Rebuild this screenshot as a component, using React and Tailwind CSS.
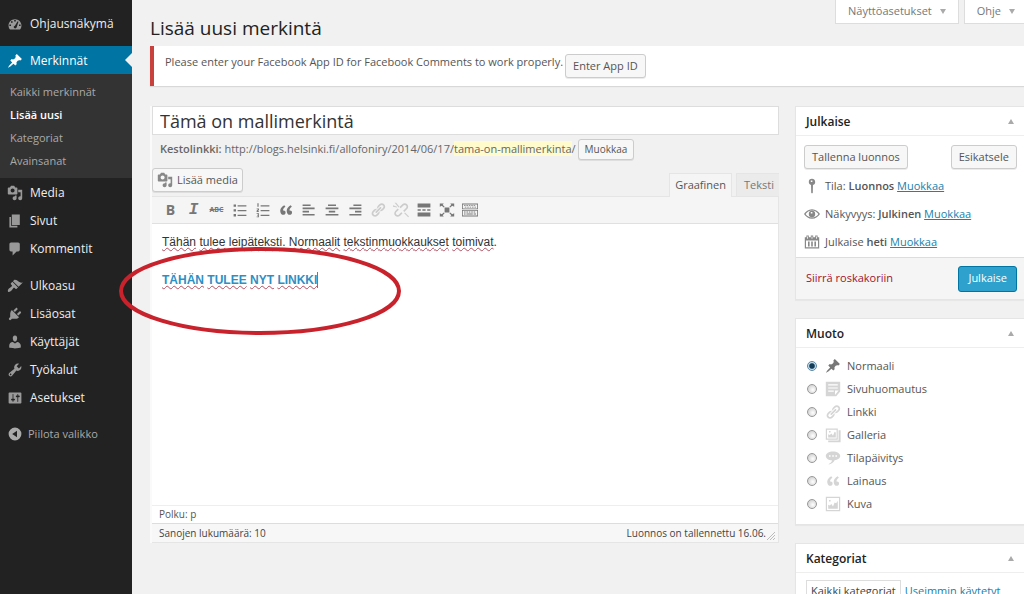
import React, { useState } from 'react'
import clsx from 'clsx'

const PATHS = {
  media:
    'M13 11V4c0-.55-.45-1-1-1h-1.67L9 1H5L3.67 3H2c-.55 0-1 .45-1 1v7c0 .55.45 1 1 1h10c.55 0 1-.45 1-1zM7 4.5c1.38 0 2.5 1.12 2.5 2.5S8.38 9.5 7 9.5 4.5 8.38 4.5 7 5.62 4.5 7 4.5zM14 6h5v10.5c0 1.38-1.12 2.5-2.5 2.5S14 17.88 14 16.5s1.12-2.5 2.5-2.5c.17 0 .34.02.5.05V9h-3V6zm-4 8.05V13h2v3.5c0 1.38-1.12 2.5-2.5 2.5S7 17.88 7 16.5 8.12 14 9.5 14c.17 0 .34.02.5.05z',
  pin: 'M10.44 3.02l1.82-1.82 6.36 6.35-1.83 1.82c-1.05-.68-2.48-.57-3.41.36l-.75.75c-.92.93-1.04 2.35-.35 3.41l-1.83 1.82-2.41-2.41-2.8 2.79c-.42.42-3.38 2.71-3.8 2.29s1.86-3.39 2.28-3.81l2.79-2.79L4.1 9.36l1.83-1.82c1.05.69 2.48.57 3.4-.36l.75-.75c.93-.92 1.05-2.35.36-3.41z',
  gauge:
    'M3.76 17h12.48c1.16-1.35 1.86-3.1 1.86-5.02 0-4.41-3.63-7.98-8.1-7.98S1.9 7.57 1.9 11.98c0 1.92.7 3.67 1.86 5.02zM9 5h2v2H9zM5 6.500h2v2H5zM3 10.500h2v2H3zM15 10.500h2v2h-2zM13.300 6.500l1 .6-2.300 7.400c-.5 1.500-3.600 1.300-3.600-.7 0-1 .8-1.600 1.500-1.700z',
  page: 'M6 15V2h10v13H6zm-1 1h8v2H3V5h2v11z',
  comment: 'M5 2h9c1.1 0 2 .9 2 2v7c0 1.1-.9 2-2 2h-2l-5 5v-5H5c-1.1 0-2-.9-2-2V4c0-1.1.9-2 2-2z',
  brush:
    'M14.48 11.06L7.41 3.99l1.5-1.5c.5-.56 2.3-.47 3.51.32 1.21.8 1.43 1.28 2.91 2.1 1.18.64 2.45 1.26 4.45.85zm-.71.71L6.7 4.7 4.93 6.47c-.39.39-.39 1.02 0 1.41l1.06 1.06c.39.39.39 1.03 0 1.42-.6.6-1.43 1.11-2.21 1.69-.35.26-.7.53-1.01.84C1.43 14.23.4 16.08 1.4 17.07c.99 1 2.84-.03 4.18-1.36.31-.31.58-.66.85-1.02.57-.78 1.08-1.61 1.69-2.21.39-.39 1.02-.39 1.41 0l1.06 1.06c.39.39 1.02.39 1.41 0z',
  plug: 'M13.11 4.36L9.87 7.6 8 5.73l3.24-3.24c.35-.34 1.05-.2 1.56.32.52.51.66 1.21.31 1.55zm-8 1.77l.91-1.12 9.01 9.01-1.19.84c-.71.71-2.63 1.16-3.82 1.16H6.14L4.9 17.26c-.59.59-1.54.59-2.12 0-.59-.58-.59-1.53 0-2.12l1.24-1.24v-3.88c0-1.13.4-3.19 1.09-3.89zm7.26 3.97l3.24-3.24c.34-.35 1.04-.21 1.55.31.52.51.66 1.21.31 1.55l-3.24 3.25z',
  user: 'M10 9.25c-2.27 0-2.73-3.44-2.73-3.44C7 4.02 7.82 2 9.97 2c2.16 0 2.98 2.02 2.71 3.81 0 0-.41 3.44-2.68 3.44zm0 2.57L12.72 10c2.39 0 4.52 2.33 4.52 4.53v2.49s-3.65 1.13-7.24 1.13c-3.65 0-7.24-1.13-7.24-1.13v-2.49c0-2.25 1.94-4.48 4.47-4.48z',
  wrench:
    'M16.68 9.77c-1.34 1.34-3.3 1.67-4.95.99l-5.41 6.52c-.99.99-2.59.99-3.58 0s-.99-2.59 0-3.57l6.52-5.42c-.68-1.65-.35-3.61.99-4.95 1.28-1.28 3.12-1.62 4.72-1.06l-2.89 2.89 2.82 2.82 2.86-2.87c.53 1.58.18 3.39-1.08 4.65zM3.81 16.21c.4.39 1.04.39 1.43 0 .4-.4.4-1.04 0-1.43-.39-.4-1.03-.4-1.43 0-.39.39-.39 1.03 0 1.43z',
  settings:
    'M2 4c0-.55.45-1 1-1h14c.55 0 1 .45 1 1v12c0 .55-.45 1-1 1H3c-.55 0-1-.45-1-1zM8 11h1c.55 0 1 .45 1 1s-.45 1-1 1H8v1.500c0 .28-.22.5-.5.5s-.5-.22-.5-.5V13H6c-.55 0-1-.45-1-1s.45-1 1-1h1V5.500c0-.28.22-.5.5-.5s.5.22.5.5zM13 9h-1c-.55 0-1-.45-1-1s.45-1 1-1h1V5.500c0-.28.22-.5.5-.5s.5.22.5.5V7h1c.55 0 1 .45 1 1s-.45 1-1 1h-1v5.500c0 .28-.22.5-.5.5s-.5-.22-.5-.5z',
  collapse: 'M10 2a8 8 0 1 0 0 16 8 8 0 0 0 0-16zM12.500 6v8L6.500 10z',
  link: 'M17.74 2.76c1.68 1.69 1.68 4.41 0 6.1l-1.53 1.52c-1.12 1.12-2.7 1.47-4.14 1.09l2.62-2.61.76-.77.76-.76c.84-.84.84-2.2 0-3.04-.84-.85-2.2-.85-3.04 0l-.77.76-3.38 3.38c-.37-1.44-.02-3.02 1.1-4.14l1.52-1.53c1.69-1.68 4.42-1.68 6.1 0zM8.59 13.43l5.34-5.34c.42-.42.42-1.1 0-1.52-.44-.43-1.13-.39-1.53 0l-5.33 5.34c-.42.42-.42 1.1 0 1.52.44.43 1.13.39 1.52 0zm-.76 2.29l4.14-4.15c.38 1.44.03 3.02-1.09 4.14l-1.52 1.53c-1.69 1.68-4.41 1.68-6.1 0-1.68-1.68-1.68-4.42 0-6.1l1.53-1.52c1.12-1.12 2.7-1.47 4.14-1.1l-4.14 4.15c-.85.84-.85 2.2 0 3.05.84.84 2.2.84 3.04 0z',
  unlink:
    'M17.700 2.800c1.700 1.700 1.700 4.400 0 6.100l-3.500 3.500-1.500-1.500 3.500-3.500c.9-.9.9-2.200 0-3.100s-2.200-.9-3.100 0L9.600 7.800 8.100 6.300l3.500-3.500c1.700-1.700 4.400-1.700 6.100 0zM2.800 17.200c-1.700-1.700-1.700-4.400 0-6.100l3-3 1.500 1.500-3 3c-.9.9-.9 2.200 0 3.100s2.200.9 3.100 0l3-3 1.500 1.500-3 3c-1.700 1.700-4.400 1.700-6.100 0zM2 1h2l4 5-1 1zM0 4l5 2v1L0 6zM19 19l-5-5 1-1 5 5z',
  quote:
    'M9.49 13.22c0-.74-.2-1.38-.61-1.9-.62-.78-1.83-.88-2.53-.72-.29-1.65 1.11-3.75 2.92-4.65L7.88 4c-2.73 1.3-5.42 4.28-4.96 8.05C3.21 14.43 4.59 16 6.54 16c.85 0 1.56-.25 2.12-.75s.83-1.18.83-2.03zm8.05 0c0-.74-.2-1.38-.61-1.9-.63-.78-1.83-.88-2.53-.72-.29-1.65 1.11-3.75 2.92-4.65L15.93 4c-2.73 1.3-5.41 4.28-4.95 8.05.29 2.38 1.66 3.95 3.61 3.95.85 0 1.56-.25 2.12-.75s.83-1.18.83-2.03z',
  bullets: 'M2 3h3v3H2zM2 9h3v3H2zM2 15h3v3H2zM7 4h11v1.500H7zM7 10h11v1.500H7zM7 16h11v1.500H7z',
  numbers:
    'M3 1.500h1.500V6H3zM2 8h3v2L3.500 11.500H5v1H2v-1.500L3.800 9H2zM2 14h3v5H2v-1h2v-1H2.500v-1H4v-1H2zM7 4h11v1.500H7zM7 10h11v1.500H7zM7 16h11v1.500H7z',
  left: 'M2 3h10v2H2zM2 7h15v2H2zM2 11h8v2H2zM2 15h15v2H2z',
  center: 'M5 3h10v2H5zM2 7h16v2H2zM6 11h8v2H6zM2 15h16v2H2z',
  right: 'M8 3h10v2H8zM3 7h15v2H3zM10 11h8v2h-8zM3 15h15v2H3z',
  more: 'M2 2h16v5H2zM2 9h4v2H2zM8 9h4v2H8zM14 9h4v2h-4zM2 13h16v5H2z',
  expand:
    'M7 7h6v6H7zM1 2h5L4.600 3.500 7 6 6 7 3.500 4.600 1 6zM19 2h-5l1.400 1.500L13 6l1 1 2.500-2.400L19 6zM1 18h5l-1.400-1.500L7 14l-1-1-2.500 2.400L1 14zM19 18h-5l1.400-1.500L13 14l1-1 2.500 2.400L19 14z',
  keyboard:
    'M0 2h20v7H0zM1 3v5h18V3zM0 10h20v8H0zM1 11v6h18v-6zM2.500 4h2v1h-2zM5.500 4h2v1h-2zM8.500 4h2v1h-2zM11.500 4h2v1h-2zM14.500 4h2v1h-2zM3.500 6h2v1h-2zM6.500 6h2v1h-2zM9.500 6h2v1h-2zM12.500 6h2v1h-2zM15.500 6h2v1h-2zM2.500 12h2v1h-2zM5.500 12h2v1h-2zM8.500 12h2v1h-2zM11.500 12h2v1h-2zM14.500 12h2v1h-2zM2.500 14.500h2v1h-2zM5.500 14.500h8v1h-8zM14.500 14.500h3v1h-3z',
  needle:
    'M10 1a4 4 0 0 0-4 4c0 1.800 1.200 3.300 2.800 3.800L9 18.500l1 1 1-1 .2-9.700A4 4 0 0 0 10 1zM8.500 3h2v2h-2z',
  eye: 'M10 4C5.500 4 2 6.800 0 10c2 3.200 5.500 6 10 6s8-2.800 10-6c-2-3.200-5.500-6-10-6zM10 5.500c3.500 0 6.300 2 8 4.500-1.700 2.500-4.500 4.500-8 4.500S3.700 12.500 2 10c1.700-2.500 4.500-4.500 8-4.500zM10 6a4 4 0 1 0 0 8 4 4 0 0 0 0-8zM8.500 7.500h2v2h-2z',
  calendar:
    'M1 4h2V2h3v2h2.500V2h3v2H14V2h3v2h2v14H1zM2.500 8v8.500h15V8zM4 3v3h1V3zM9.500 3v3h1V3zM15 3v3h1V3zM5 9.500h2v6H5zM9 9.500h2v6H9zM13 9.500h2v6h-2z',
  aside: 'M1 1h18v12l-5 6H1zM4 4v1.500h12V4zM4 8v1.500h12V8zM4 12v1.500h7V12zM12.500 12v5.500L17 12z',
  gallery:
    'M1 2h15v14H1zM2.500 3.500v11h12v-11zM17 4h2.500v15H4v-2h13zM4 13V9l2 1 2-2 2 3 2-5 1.500 1v6zM5 5h2v2H5z',
  status:
    'M10 2c-5 0-9 2.300-9 5.500S5 13 9 13c-1 2-2.500 3.500-5 5 4-.5 7-2.500 8-5.200 4-.5 7-2.500 7-5.300C19 4.300 15 2 10 2zM5 6.500h2v2H5zM9 6.500h2v2H9zM13 6.500h2v2h-2z',
  image: 'M1 1h18v18H1zM2.500 2.500v15h15v-15zM4 16v-5l2 1 2-2 2 3 2-5 2 1 2-3v10zM5 5h2v2H5z',
}

function Icon({ name, className }) {
  return (
    <svg viewBox="0 0 20 20" className={clsx('size-4 shrink-0 fill-current', className)} aria-hidden="true">
      <path fillRule="evenodd" d={PATHS[name]} />
    </svg>
  )
}

const MENU_TOP = [
  { icon: 'media', label: 'Media' },
  { icon: 'page', label: 'Sivut' },
  { icon: 'comment', label: 'Kommentit' },
]

const MENU_BOTTOM = [
  { icon: 'brush', label: 'Ulkoasu' },
  { icon: 'plug', label: 'Lisäosat' },
  { icon: 'user', label: 'Käyttäjät' },
  { icon: 'wrench', label: 'Työkalut' },
  { icon: 'settings', label: 'Asetukset' },
]

const SUBMENU = ['Kaikki merkinnät', 'Lisää uusi', 'Kategoriat', 'Avainsanat']

const TOOLS = [
  { icon: 'bullets', label: 'Luettelo' },
  { icon: 'numbers', label: 'Numeroitu luettelo' },
  { icon: 'quote', label: 'Lainaus' },
  { icon: 'left', label: 'Tasaa vasemmalle' },
  { icon: 'center', label: 'Keskitä' },
  { icon: 'right', label: 'Tasaa oikealle' },
  { icon: 'link', label: 'Lisää linkki', disabled: true },
  { icon: 'unlink', label: 'Poista linkki', disabled: true },
  { icon: 'more', label: 'Lue lisää' },
  { icon: 'expand', label: 'Koko näyttö' },
  { icon: 'keyboard', label: 'Työkalurivi' },
]

const FORMATS = [
  { icon: 'pin', label: 'Normaali' },
  { icon: 'aside', label: 'Sivuhuomautus' },
  { icon: 'link', label: 'Linkki' },
  { icon: 'gallery', label: 'Galleria' },
  { icon: 'status', label: 'Tilapäivitys' },
  { icon: 'quote', label: 'Lainaus' },
  { icon: 'image', label: 'Kuva' },
]

function MenuItem({ icon, label, active }) {
  return (
    <a
      href="#"
      className={clsx(
        'relative flex h-7 items-center gap-[7px] pt-[2px] pl-[7px] text-xs',
        active ? 'bg-[#0074a2] text-white' : 'text-[#eee]'
      )}
    >
      <Icon name={icon} className={active ? 'text-white' : 'text-[#999]'} />
      {label}
      {active && (
        <span className="absolute top-1/2 right-0 -translate-y-1/2 border-y-[7px] border-r-[7px] border-y-transparent border-r-[#f1f1f1]" />
      )}
    </a>
  )
}

function Sidebar() {
  return (
    <nav className="w-[132px] shrink-0 bg-[#222] pt-[9px]">
      <MenuItem icon="gauge" label="Ohjausnäkymä" />
      <div className="mt-[9px]">
        <MenuItem icon="pin" label="Merkinnät" active />
      </div>
      <ul className="bg-[#333] py-[6px]">
        {SUBMENU.map((item) => (
          <li key={item}>
            <a
              href="#"
              className={clsx(
                'flex h-[23px] items-center pt-px pl-[10px] text-[11px]',
                item === 'Lisää uusi' ? 'font-semibold text-white' : 'text-[#aaa]'
              )}
            >
              {item}
            </a>
          </li>
        ))}
      </ul>
      {MENU_TOP.map((item) => (
        <MenuItem key={item.label} {...item} />
      ))}
      <div className="mt-[9px]">
        {MENU_BOTTOM.map((item) => (
          <MenuItem key={item.label} {...item} />
        ))}
      </div>
      <button className="mt-[9px] flex h-7 items-center gap-[5px] pl-[7px] text-[11px] text-[#aaa]">
        <Icon name="collapse" />
        Piilota valikko
      </button>
    </nav>
  )
}

function Button({ className, children }) {
  return (
    <button
      className={clsx(
        'flex items-center justify-center rounded-[3px] border border-[#ccc] bg-[#f7f7f7] whitespace-nowrap text-[#555] shadow-[0_1px_0_rgba(0,0,0,0.08)]',
        className
      )}
    >
      {children}
    </button>
  )
}

function ScreenTab({ children }) {
  return (
    <button className="flex h-6 items-center gap-2 border border-t-0 border-[#ddd] bg-white px-3 pb-px text-[11px] text-[#777]">
      {children}
      <span className="border-x-[3px] border-t-[5px] border-x-transparent border-t-[#aaa]" />
    </button>
  )
}

function Panel({ title, children }) {
  return (
    <section className="border border-r-0 border-[#e5e5e5] bg-white shadow-[0_1px_1px_rgba(0,0,0,0.04)]">
      <header className="flex h-[29px] items-center justify-between border-b border-[#eee] px-[10px] pt-px">
        <h3 className="text-xs font-semibold text-[#222]">{title}</h3>
        <button aria-label="Pienennä">
          <span className="block border-x-[3px] border-b-[5px] border-x-transparent border-b-[#aaa]" />
        </button>
      </header>
      {children}
    </section>
  )
}

function PublishRow({ icon, children }) {
  return (
    <div className="flex h-7 items-center gap-[5px] pl-2">
      <Icon name={icon} className="text-[#888]" />
      <p>
        {children}{' '}
        <a href="#" className="text-[#2080ab] underline">
          Muokkaa
        </a>
      </p>
    </div>
  )
}

// Word flagged by the spell checker
function Typo({ children }) {
  return (
    <span className="underline decoration-[#b05060] decoration-wavy decoration-1 underline-offset-1">
      {children}
    </span>
  )
}

function Editor() {
  return (
    <div className="border-l-2 border-[#fafafa]">
      <input
        type="text"
        aria-label="Otsikko"
        defaultValue="Tämä on mallimerkintä"
        className="block h-[29px] w-full border border-[#ddd] bg-white px-[7px] text-lg text-[#333] outline-none"
      />
      <div className="flex h-[29px] items-center pl-2 text-[11px] text-[#666]">
        <p className="whitespace-nowrap">
          <strong className="font-semibold">Kestolinkki:</strong>{' '}
          http://blogs.helsinki.fi/allofoniry/2014/06/17/
          <span className="bg-[#fffbcc]">tama-on-mallimerkinta</span>/
        </p>
        <Button className="ml-[2px] h-[21px] px-[6px] text-[10px]">Muokkaa</Button>
      </div>
      <div className="flex h-8 items-end justify-between">
        <Button className="mb-1 h-6 gap-1 px-1 text-[11px]">
          <Icon name="media" className="text-[#888]" />
          Lisää media
        </Button>
        <div className="flex gap-1 text-[11px]">
          <button className="-mb-px h-6 border border-b-0 border-[#e5e5e5] bg-[#f5f5f5] px-[5px] text-[#555]">
            Graafinen
          </button>
          <button className="h-[23px] border border-r-0 border-b-0 border-[#e5e5e5] bg-[#ebebeb] pr-[5px] pl-[7px] text-[#777]">
            Teksti
          </button>
        </div>
      </div>
      <div className="border border-l-0 border-[#e5e5e5] bg-white">
        <div className="flex h-[27px] items-center border-b border-[#e0e0e0] bg-[#f5f5f5] pl-[7px] text-[#777]">
          <button className="w-[23px] text-sm font-bold">B</button>
          <button className="w-[23px] font-['Liberation_Mono',monospace] text-base leading-none font-bold italic">
            I
          </button>
          <button className="w-[23px] text-[7px] font-bold line-through">ABC</button>
          {TOOLS.map((tool) => (
            <button
              key={tool.label}
              aria-label={tool.label}
              disabled={tool.disabled}
              className="flex w-[23px] justify-center disabled:text-[#ccc]"
            >
              <Icon name={tool.icon} />
            </button>
          ))}
        </div>
        <div
          role="textbox"
          aria-label="Sisältö"
          className="h-[281px] px-[10px] pt-[8px] font-['Liberation_Sans',Arial,sans-serif] text-xs leading-5 text-[#333]"
        >
          <p className="mb-5">
            <Typo>Tähän</Typo> <Typo>tulee</Typo> <Typo>leipäteksti</Typo>. <Typo>Normaalit</Typo>{' '}
            <Typo>tekstinmuokkaukset</Typo> <Typo>toimivat</Typo>.
          </p>
          <p className="flex items-center">
            <strong className="border-r border-[#2e8fc4] leading-4 text-[#2e8fc4]">
              <Typo>TÄHÄN</Typo> <Typo>TULEE</Typo> <Typo>NYT</Typo> <Typo>LINKKI</Typo>
            </strong>
          </p>
        </div>
        <p className="h-[18px] border-t border-[#eee] pl-[7px] text-[10px] leading-4 text-[#555]">Polku: p</p>
        <div className="relative flex h-[19px] items-center justify-between border-t border-[#ddd] bg-[#f7f7f7] pr-3 pl-[7px] text-[10px] text-[#444]">
          <span>Sanojen lukumäärä: 10</span>
          <span>Luonnos on tallennettu 16.06.</span>
          <svg viewBox="0 0 10 10" className="absolute right-[2px] bottom-px size-[10px]" aria-hidden="true">
            <path d="M1 9L9 1M4 9l5-5M7 9l2-2" stroke="#bbb" fill="none" />
          </svg>
        </div>
      </div>
    </div>
  )
}

function FormatList() {
  const [format, setFormat] = useState('Normaali')

  return (
    <div className="pt-[6px] pb-[9px] pl-[11px]">
      {FORMATS.map(({ icon, label }) => (
        <label key={label} className="flex h-[23px] items-center pt-px text-[11px]">
          <input
            type="radio"
            name="format"
            checked={format === label}
            onChange={() => setFormat(label)}
            className="size-[10px] appearance-none rounded-full border border-[#999] bg-[radial-gradient(circle_at_60%_60%,#fff,#c4c4c4)] checked:border-[#5c87a3] checked:bg-[radial-gradient(circle,#123c58_40%,#c5e0ee_60%)]"
          />
          <Icon
            name={icon}
            className={clsx('mr-[6px] ml-2', format === label ? 'text-[#777]' : 'text-[#d5d5d5]')}
          />
          {label}
        </label>
      ))}
    </div>
  )
}

export default function App() {
  return (
    <div className="flex h-screen overflow-hidden bg-[#f1f1f1] font-['Open_Sans',sans-serif] text-[#555]">
      <Sidebar />
      <main className="min-w-0 flex-1 pl-[18px]">
        <div className="flex h-[46px] justify-between">
          <h1 className="self-end pb-1 text-[19px] text-[#222]">Lisää uusi merkintä</h1>
          <div className="-mr-1 flex items-start gap-[5px]">
            <ScreenTab>Näyttöasetukset</ScreenTab>
            <ScreenTab>Ohje</ScreenTab>
          </div>
        </div>

        <div className="flex h-10 items-start border-l-4 border-[#c9413d] bg-white pt-2 pl-[11px] text-[11px] shadow-[0_1px_1px_rgba(0,0,0,0.1)]">
          <p className="leading-4">Please enter your Facebook App ID for Facebook Comments to work properly.</p>
          <Button className="ml-[2px] h-6 px-[7px]">Enter App ID</Button>
        </div>

        <div className="mt-5 grid grid-cols-[1fr_229px] items-start gap-4">
          <div className="relative">
            <Editor />
            {/* red ring round the link text */}
            <svg
              viewBox="0 0 284 90"
              className="pointer-events-none absolute top-[140px] -left-8 h-[90px] w-[284px]"
              aria-hidden="true"
            >
              <ellipse cx="142" cy="45" rx="139" ry="42" fill="none" stroke="#c8232c" strokeWidth="4" />
            </svg>
          </div>

          <aside className="flex flex-col gap-[18px] text-[11px]">
            <Panel title="Julkaise">
              <div className="flex justify-between pt-[9px] pr-[7px] pb-[3px] pl-2">
                <Button className="h-6 px-[7px]">Tallenna luonnos</Button>
                <Button className="h-6 px-[7px]">Esikatsele</Button>
              </div>
              <PublishRow icon="needle">
                Tila: <strong className="font-semibold">Luonnos</strong>
              </PublishRow>
              <PublishRow icon="eye">
                Näkyvyys: <strong className="font-semibold">Julkinen</strong>
              </PublishRow>
              <PublishRow icon="calendar">
                Julkaise <strong className="font-semibold">heti</strong>
              </PublishRow>
              <div className="mt-px flex h-[42px] items-center justify-between border-t border-[#ddd] bg-[#f5f5f5] pr-[7px] pl-[10px]">
                <a href="#" className="text-[#a0122a]">
                  Siirrä roskakoriin
                </a>
                <button className="h-[26px] rounded-[3px] border border-[#0074a2] bg-[#2ea2cc] px-[9px] text-white">
                  Julkaise
                </button>
              </div>
            </Panel>

            <Panel title="Muoto">
              <FormatList />
            </Panel>

            <Panel title="Kategoriat">
              <div className="flex gap-1 pt-[7px] pl-[10px]">
                <a href="#" className="border border-b-0 border-[#ddd] px-1 py-[2px] text-[#444]">
                  Kaikki kategoriat
                </a>
                <a href="#" className="py-[3px] text-[#2080ab]">
                  Useimmin käytetyt
                </a>
              </div>
            </Panel>
          </aside>
        </div>
      </main>
    </div>
  )
}
